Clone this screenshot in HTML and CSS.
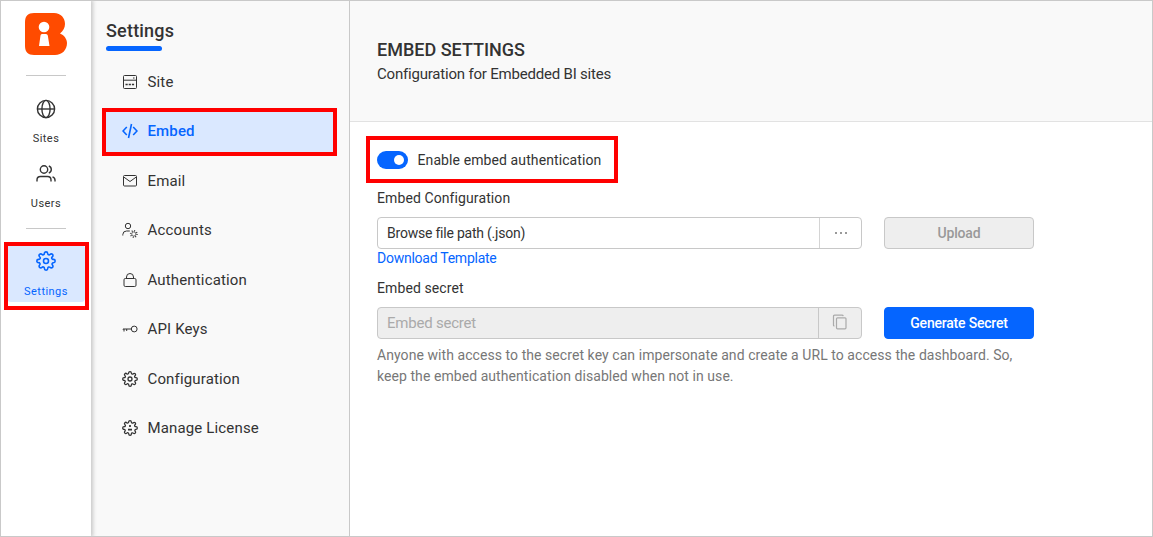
FILE: index.html
```html
<!DOCTYPE html>
<html lang="en">
<head>
<meta charset="utf-8">
<title>Embed Settings</title>
<link rel="stylesheet" href="styles.css">
</head>
<body>
<svg class="defs" width="0" height="0">
  <symbol id="gear" viewBox="0 0 24 24"><path d="M19.4 15a1.65 1.65 0 0 0 .33 1.82l.06.06a2 2 0 1 1-2.83 2.83l-.06-.06a1.65 1.65 0 0 0-2.8 1.17V21a2 2 0 0 1-4 0v-.09a1.65 1.65 0 0 0-2.9-1.26l-.06.06a2 2 0 1 1-2.83-2.83l.06-.06A1.65 1.65 0 0 0 3.09 14H3a2 2 0 0 1 0-4h.09A1.65 1.65 0 0 0 4.6 7.2l-.29-.32a2 2 0 1 1 2.83-2.83l.06.06A1.65 1.65 0 0 0 10 3.09V3a2 2 0 0 1 4 0v.09a1.65 1.65 0 0 0 2.9 1.02l.06-.06a2 2 0 1 1 2.83 2.83l-.06.06A1.65 1.65 0 0 0 20.91 10H21a2 2 0 0 1 0 4h-.09a1.65 1.65 0 0 0-1.51 1z"/></symbol>
</svg>
<div class="app">
  <nav class="rail">
    <svg class="logo" viewBox="0 0 42 42"><path d="M9 0H29C36 0 40 5 40 11C40 15 38 18 35 20.500C39 22 42 26 42 30C42 37 37 42 30 42H9C3 42 0 39 0 33V9C0 3 3 0 9 0Z" fill="#ff4b00"/><circle cx="19" cy="14" r="5.300" fill="#fff"/><path d="M17 21H21Q22.500 21 22.800 22.500L24.500 33H14L15.500 22.500Q15.700 21 17 21Z" fill="#fff"/></svg>
    <hr class="rule">
    <a class="rail-item sites"><svg class="icon" viewBox="0 0 20 20"><circle cx="10" cy="10" r="8.600"/><ellipse cx="10" cy="10" rx="4.100" ry="8.600"/><path d="M1.400 10H18.600"/></svg><span>Sites</span></a>
    <a class="rail-item users"><svg class="icon" viewBox="0 0 20 20"><circle cx="8" cy="5.500" r="3.700"/><path d="M1 17.500V16Q1 12.500 4.500 12.500H11.500Q15 12.500 15 16V17.500M12.800 2A3.700 3.700 0 0 1 12.800 9M16.500 12.800Q19 13.500 19 16V17.500"/></svg><span>Users</span></a>
    <hr class="rule">
    <a class="rail-item current"><svg class="icon" viewBox="0 0 24 24"><use href="#gear"/><circle cx="12" cy="12" r="3"/></svg><span>Settings</span></a>
  </nav>
  <aside class="sidebar">
    <h2>Settings</h2>
    <ul class="menu">
      <li><svg class="icon" viewBox="0 0 16 16"><rect x="1.500" y="1.500" width="13" height="13" rx="1"/><path d="M1.500 6.200H14.500M11 4H12.500"/><path d="M3.500 10.500H12.500" stroke-width="1.500" stroke-dasharray="2.200 1"/></svg>Site</li>
      <li class="current"><svg class="icon" viewBox="0 0 16 16"><path d="M4.800 4L1 8L4.800 12M11.200 4L15 8L11.200 12M9.500 1L6.500 15" stroke-width="1.600"/></svg>Embed</li>
      <li><svg class="icon" viewBox="0 0 16 16"><rect x="1.500" y="2.500" width="13" height="10.500" rx="1"/><path d="M2 4.200L8 8.500L14 4.200"/></svg>Email</li>
      <li><svg class="icon" viewBox="0 0 16 16"><circle cx="6" cy="4" r="2.700"/><path d="M.8 13.500V12.500Q1 9 4.500 9H7.800"/><circle cx="11.800" cy="12" r="2.100" stroke-width=".7"/><circle cx="11.800" cy="12" r="3.200" stroke-width="1.500" stroke-dasharray=".9 1.613"/></svg>Accounts</li>
      <li><svg class="icon" viewBox="0 0 16 16"><rect x="2" y="6.500" width="12" height="8" rx="1.300"/><path d="M4.500 6.500V5A3.500 3.500 0 0 1 11.500 5V6.500"/></svg>Authentication</li>
      <li><svg class="icon" viewBox="0 0 16 16"><circle cx="12.200" cy="8" r="2.900"/><path d="M9.300 8H1V8.500M2 8V10.500M4.700 8V10"/></svg>API Keys</li>
      <li><svg class="icon" viewBox="0 0 24 24" stroke-width="1.900"><use href="#gear"/><circle cx="12" cy="12" r="3"/></svg>Configuration</li>
      <li><svg class="icon" viewBox="0 0 24 24" stroke-width="1.900"><use href="#gear"/><path d="M12 7.500V10.500M9 14.500H15" stroke-width="2.600"/></svg>Manage License</li>
    </ul>
  </aside>
  <main>
    <header><h1>EMBED SETTINGS</h1><p>Configuration for Embedded BI sites</p></header>
    <div class="form">
      <label class="toggle-row"><span class="toggle"></span><span class="toggle-text">Enable embed authentication</span></label>
      <div class="label config-label">Embed Configuration</div>
      <div class="row"><div class="field"><span class="value">Browse file path (.json)</span><span class="addon"><i></i><i></i><i></i></span></div><button class="btn upload">Upload</button></div>
      <a class="link">Download Template</a>
      <div class="label secret-label">Embed secret</div>
      <div class="row"><div class="field disabled"><span class="value">Embed secret</span><span class="addon"><svg viewBox="0 0 16 16"><rect x="4.500" y="3.800" width="9.500" height="11" rx="1"/><path d="M2.500 12Q1.500 12 1.500 11V2.200Q1.500 1.200 2.500 1.200H10Q11 1.200 11.300 2.200"/></svg></span></div><button class="btn primary">Generate Secret</button></div>
      <p class="help">Anyone with access to the secret key can impersonate and create a URL to access the dashboard. So,<br>keep the embed authentication disabled when not in use.</p>
    </div>
  </main>
  <div class="mark mark-settings"></div>
  <div class="mark mark-embed"></div>
  <div class="mark mark-toggle"></div>
</div>
</body>
</html>
```
FILE: styles.css
```css
* { box-sizing: border-box; }
body { margin: 0; font-family: Roboto, "Liberation Sans", sans-serif; color: #333; }
.defs { position: absolute; }
h1, h2, p, ul { margin: 0; padding: 0; }
.app { position: relative; display: flex; width: 1153px; height: 537px; border: 1px solid #c9c9c9; background: #fff; overflow: hidden; }
.icon { fill: none; stroke: currentColor; flex: none; }

.rail { width: 90px; flex: none; display: flex; flex-direction: column; align-items: center; background: #fff; box-shadow: 1px 0 4px 1px rgba(0,0,0,.2); z-index: 1; padding-top: 11.500px; }
.logo { width: 42px; height: 42px; }
.rule { width: 40px; height: 1px; margin: 20.500px 0 0; border: 0; background: #c8c8c8; }
.rail-item { display: flex; flex-direction: column; align-items: center; font-size: 11px; line-height: 14px; letter-spacing: .45px; }
.rail-item .icon { width: 20px; height: 20px; stroke-width: 1.4; }
.rail-item span { margin-top: 13px; }
.sites { margin-top: 23px; }
.users { margin-top: 18px; }
.users + .rule { margin-top: 17px; }
.rail-item.current { width: 78px; height: 57px; margin-top: 16px; padding-top: 6px; background: #dae8ff; border-radius: 4px; color: #0565ff; }
.rail-item.current .icon { stroke-width: 1.9; }
.rail-item.current span { margin-top: 14px; }

.sidebar { width: 259px; flex: none; background: #f9f9f9; border-right: 1px solid #c9c9c9; padding: 18px 0 0 15px; }
.sidebar h2 { font-size: 18px; font-weight: 500; line-height: 24px; letter-spacing: .2px; }
.sidebar h2::after { content: ""; display: block; width: 56px; height: 5px; margin-top: 3px; border-radius: 3px; background: #0565ff; }
.menu { list-style: none; display: grid; grid-auto-rows: 49.500px; margin-top: 6px; font-size: 15px; letter-spacing: .15px; }
.menu li { display: flex; align-items: center; gap: 9.500px; padding-left: 16px; width: 228px; }
.menu .icon { width: 16px; height: 16px; }
.menu .current { color: #0565ff; font-weight: 500; background: #dae8ff; height: 42px; align-self: center; }

main { flex: 1; }
header { height: 121px; background: #f9f9f9; border-bottom: 1px solid #e2e2e2; padding: 37px 27px 0; }
h1 { font-size: 18px; font-weight: 500; line-height: 24px; }
header p { font-size: 15px; line-height: 24px; letter-spacing: -.2px; }
.form { padding: 28px 27px 0; font-size: 14px; }
.toggle-row { display: flex; align-items: center; height: 20px; gap: 9.500px; letter-spacing: .1px; }
.toggle { width: 31px; height: 18px; border-radius: 9px; background: #0565ff; display: flex; justify-content: flex-end; align-items: center; padding-right: 4px; }
.toggle::after { content: ""; width: 10px; height: 10px; border-radius: 50%; background: #fff; }
.label { line-height: 20px; letter-spacing: .1px; }
.config-label { margin-top: 18px; }
.row { display: flex; gap: 22px; margin-top: 9px; }
.field { width: 485px; height: 32px; display: flex; border: 1px solid #c8c8c8; border-radius: 4px; }
.value { flex: 1; padding-left: 9px; line-height: 30px; letter-spacing: -.22px; }
.addon { width: 42px; border-left: 1px solid #d4d4d4; display: flex; justify-content: center; align-items: center; gap: 3px; }
.addon i { width: 2px; height: 2px; background: #999; }
.disabled { background: #eee; color: #aaa; font-size: 15px; }
.disabled .addon { width: 43px; border-color: #c8c8c8; }
.addon svg { width: 16px; height: 16px; fill: none; stroke: #aaa; stroke-width: 1.200; margin: -2px 1px 0 0; }
.btn { width: 150px; height: 32px; border-radius: 4px; border: 1px solid #c8c8c8; background: #eee; color: #999; font: 500 14px Roboto, sans-serif; letter-spacing: -.2px; padding: 0 0 1px; }
.btn.primary { border-color: #0565ff; background: #0565ff; color: #fff; padding: 0; }
.link { display: block; color: #0565ff; line-height: 20px; letter-spacing: -.25px; margin-top: -1px; }
.secret-label { margin-top: 10px; }
.help { color: #777; line-height: 21px; margin-top: 6px; letter-spacing: .065px; white-space: nowrap; }

.mark { position: absolute; z-index: 2; border: 4px solid #f00; }
.mark-settings { left: 3px; top: 241px; width: 85px; height: 68px; }
.mark-embed { left: 101px; top: 107px; width: 235px; height: 48px; }
.mark-toggle { left: 365px; top: 135px; width: 252px; height: 47px; }
```
